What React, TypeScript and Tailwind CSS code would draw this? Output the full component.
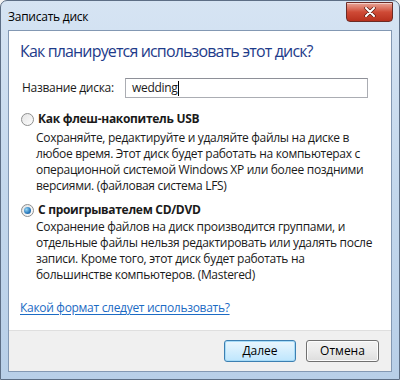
import React from 'react';

const FONT = { fontFamily: '"Open Sans", "Noto Sans", "Liberation Sans", sans-serif' };

function Radio({ checked }: { checked?: boolean }) {
  return (
    <span className="relative w-[13px] h-[13px] rounded-full border border-[#8e8f8f] bg-gradient-to-br from-[#e4e4e4] to-[#fdfdfd] flex items-center justify-center shrink-0">
      {checked && (
        <span className="w-[7px] h-[7px] rounded-full bg-[radial-gradient(circle_at_35%_35%,#9ad8f5,#2f7fc0_55%,#184f8c)]" />
      )}
    </span>
  );
}

export default function App() {
  return (
    <div className="w-[400px] h-[380px] bg-[#f3f3f3] overflow-hidden" style={FONT}>
      <div className="w-[400px] h-[380px] rounded-t-[7px] border border-[#5d6e85] bg-gradient-to-b from-[#d6e4f3] via-[#c3d7ec] to-[#b8cfe8] flex flex-col">
        {/* title bar */}
        <div className="h-[29px] flex items-start justify-between pl-[7px] pr-[6px]">
          <span className="text-[12px] text-black mt-[8px] leading-[16px] tracking-[-0.25px]">Записать диск</span>
          <div className="w-[47px] h-[20px] mt-[1px] rounded-b-[4px] border border-[#6d2b25] bg-gradient-to-b from-[#e8a497] via-[#cf4a36] to-[#b8301d] flex items-center justify-center shadow-[inset_0_1px_0_rgba(255,255,255,0.5)]">
            <svg width="12" height="10" viewBox="0 0 12 10">
              <path d="M2 1 L10 9 M10 1 L2 9" stroke="#5a1a12" strokeWidth="3.4" strokeLinecap="round" />
              <path d="M2 1 L10 9 M10 1 L2 9" stroke="#ffffff" strokeWidth="2" strokeLinecap="round" />
            </svg>
          </div>
        </div>

        {/* client area */}
        <div className="mx-[7px] mb-[7px] flex-1 border border-[#8398b3] flex flex-col bg-white">
          <div className="flex-1 bg-white px-[11px] pt-[9px] text-[12px] text-[#1a1a1a] tracking-[-0.3px] whitespace-nowrap">
            <div className="text-[16px] leading-[22px] text-[#1e3b8a] tracking-[-0.85px]">Как планируется использовать этот диск?</div>

            <div className="flex items-center mt-[16px]">
              <span className="w-[105px] pl-[2px] leading-[16px]">Название диска:</span>
              <div className="w-[243px] h-[20px] border border-[#abadb3] border-t-[#8e9098] flex items-center pl-[6px] leading-[16px]">
                wedding<span className="w-px h-[15px] bg-black" />
              </div>
            </div>

            <div className="flex items-center gap-[4px] mt-[12px] pl-[1px]">
              <Radio />
              <span className="font-bold leading-[18px]">Как флеш-накопитель USB</span>
            </div>
            <p className="pl-[16px] mt-[2px] leading-[16px]">
              Сохраняйте, редактируйте и удаляйте файлы на диске в<br />
              любое время. Этот диск будет работать на компьютерах с<br />
              операционной системой Windows XP или более поздними<br />
              версиями. (файловая система LFS)
            </p>

            <div className="flex items-center gap-[4px] mt-[7px] pl-[1px]">
              <Radio checked />
              <span className="font-bold leading-[18px]">С проигрывателем CD/DVD</span>
            </div>
            <p className="pl-[16px] leading-[16px]">
              Сохранение файлов на диск производится группами, и<br />
              отдельные файлы нельзя редактировать или удалять после<br />
              записи. Кроме того, этот диск будет работать на<br />
              большинстве компьютеров. (Mastered)
            </p>

            <a className="block mt-[17px] leading-[16px] text-[#1c6bc4] underline underline-offset-2">Какой формат следует использовать?</a>
          </div>

          <div className="h-[41px] bg-[#f0f0f0] border-t border-[#dfdfdf] flex items-center justify-end gap-[10px] pr-[12px] text-[12px]">
            <button className="w-[72px] h-[22px] rounded-[3px] border border-[#3c7fb1] bg-gradient-to-b from-[#eaf6fd] to-[#bee6fd] shadow-[inset_0_0_0_1px_#a7dbf7] text-black">Далее</button>
            <button className="w-[73px] h-[22px] rounded-[3px] border border-[#707070] bg-gradient-to-b from-[#f2f2f2] via-[#ebebeb] to-[#dddddd] shadow-[inset_0_0_0_1px_#fcfcfc] text-black">Отмена</button>
          </div>
        </div>
      </div>
    </div>
  );
}
